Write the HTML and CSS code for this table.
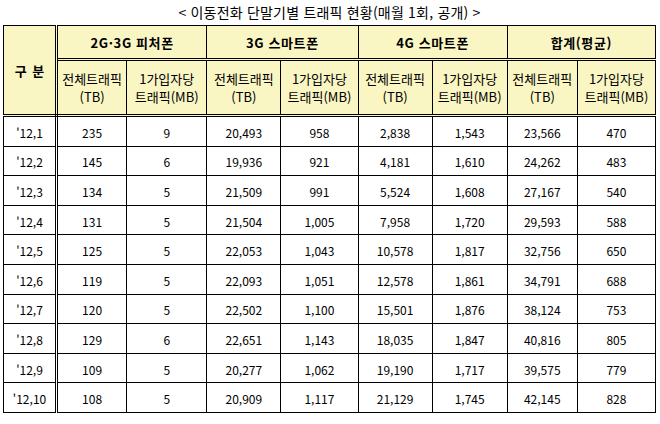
FILE: index.html
```html
<!DOCTYPE html>
<html lang="ko">
<head>
<meta charset="utf-8">
<title>이동전화 단말기별 트래픽 현황</title>
<link rel="stylesheet" href="styles.css">
</head>
<body>
<div class="page">
  <p class="title">&lt; 이동전화 단말기별 트래픽 현황(매월 1회, 공개) &gt;</p>
  <table class="traffic">
    <colgroup>
      <col class="c0"><col class="c1"><col class="c2"><col class="c3"><col class="c4"><col class="c5"><col class="c6"><col class="c7"><col class="c8">
    </colgroup>
    <thead>
      <tr class="h1">
        <th rowspan="2" class="label">구 분</th>
        <th colspan="2">2G·3G 피처폰</th>
        <th colspan="2">3G 스마트폰</th>
        <th colspan="2">4G 스마트폰</th>
        <th colspan="2">합계(평균)</th>
      </tr>
      <tr class="h2">
        <th>전체트래픽<br>(TB)</th><th>1가입자당<br>트래픽(MB)</th>
        <th>전체트래픽<br>(TB)</th><th>1가입자당<br>트래픽(MB)</th>
        <th>전체트래픽<br>(TB)</th><th>1가입자당<br>트래픽(MB)</th>
        <th>전체트래픽<br>(TB)</th><th>1가입자당<br>트래픽(MB)</th>
      </tr>
    </thead>
    <tbody>
      <tr><td class="label">'12,1</td><td>235</td><td>9</td><td>20,493</td><td>958</td><td>2,838</td><td>1,543</td><td>23,566</td><td>470</td></tr>
      <tr><td class="label">'12,2</td><td>145</td><td>6</td><td>19,936</td><td>921</td><td>4,181</td><td>1,610</td><td>24,262</td><td>483</td></tr>
      <tr><td class="label">'12,3</td><td>134</td><td>5</td><td>21,509</td><td>991</td><td>5,524</td><td>1,608</td><td>27,167</td><td>540</td></tr>
      <tr><td class="label">'12,4</td><td>131</td><td>5</td><td>21,504</td><td>1,005</td><td>7,958</td><td>1,720</td><td>29,593</td><td>588</td></tr>
      <tr><td class="label">'12,5</td><td>125</td><td>5</td><td>22,053</td><td>1,043</td><td>10,578</td><td>1,817</td><td>32,756</td><td>650</td></tr>
      <tr><td class="label">'12,6</td><td>119</td><td>5</td><td>22,093</td><td>1,051</td><td>12,578</td><td>1,861</td><td>34,791</td><td>688</td></tr>
      <tr><td class="label">'12,7</td><td>120</td><td>5</td><td>22,502</td><td>1,100</td><td>15,501</td><td>1,876</td><td>38,124</td><td>753</td></tr>
      <tr><td class="label">'12,8</td><td>129</td><td>6</td><td>22,651</td><td>1,143</td><td>18,035</td><td>1,847</td><td>40,816</td><td>805</td></tr>
      <tr><td class="label">'12,9</td><td>109</td><td>5</td><td>20,277</td><td>1,062</td><td>19,190</td><td>1,717</td><td>39,575</td><td>779</td></tr>
      <tr><td class="label">'12,10</td><td>108</td><td>5</td><td>20,909</td><td>1,117</td><td>21,129</td><td>1,745</td><td>42,145</td><td>828</td></tr>
    </tbody>
  </table>
</div>
</body>
</html>
```

FILE: styles.css
```css
html, body {
  margin: 0;
  padding: 0;
  background: #ffffff;
}

.page {
  width: 660px;
  height: 424px;
  padding: 4px 0 0 3px;
  box-sizing: border-box;
  font-family: "Noto Sans CJK KR", "Noto Sans", sans-serif;
  color: #000;
}

.title {
  margin: 0;
  width: 653px;
  text-align: center;
  font-size: 14px;
  line-height: 16px;
  height: 21px;
  letter-spacing: 0.2px;
}

.traffic {
  border-collapse: collapse;
  table-layout: fixed;
  width: 653px;
  font-size: 12px;
}

.c0 { width: 53px; }
.c1 { width: 70px; }
.c2 { width: 80px; }
.c3 { width: 74px; }
.c4 { width: 77px; }
.c5 { width: 74px; }
.c6 { width: 75px; }
.c7 { width: 70px; }
.c8 { width: 78px; }

.traffic th,
.traffic td {
  border: 1px solid #000;
  padding: 0;
  text-align: center;
  vertical-align: middle;
}

.traffic th {
  background: #faf6c4;
}

.h1 th {
  height: 32px;
  font-size: 13px;
  font-weight: bold;
  letter-spacing: 0.6px;
  border-bottom: 3px double #000;
}

.h1 th.label {
  border-bottom: 3px double #000;
  letter-spacing: 0;
  word-spacing: 2px;
}

.h2 th {
  height: 53px;
  font-size: 13px;
  font-weight: normal;
  line-height: 18px;
  letter-spacing: 0;
  border-bottom: 3px double #000;
}

.traffic .label {
  border-right: 3px double #000;
}

.traffic td {
  height: 25.6px;
  padding-top: 3px;
  line-height: 14px;
}
```
